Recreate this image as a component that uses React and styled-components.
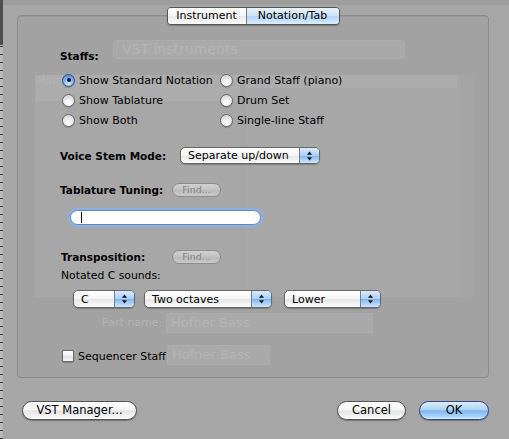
import React from "react";
import styled, { createGlobalStyle, css } from "styled-components";

const GlobalStyle = createGlobalStyle`
  html, body {
    margin: 0;
    padding: 0;
    background: #a6a6a6;
  }
  body {
    font-family: "DejaVu Sans", "Liberation Sans", sans-serif;
    font-size: 11px;
    color: #000;
  }
`;

const Window = styled.div`
  width: 509px;
  height: 439px;
  overflow: hidden;
  display: flex;
  background: linear-gradient(#9d9d9d 0 5px, #a6a6a6 5px);
`;

const Ruler = styled.div`
  width: 3px;
  flex: none;
  background:
    linear-gradient(#4e4e4e 0 45px, transparent 45px),
    repeating-linear-gradient(#b9b9b9 0 6px, #3a3a3a 6px 7px, #b9b9b9 7px 8px);
`;

const Sheet = styled.div`
  flex: 1;
  display: flex;
  flex-direction: column;
  padding: 7px 20px 0 14px;
`;

const TabBar = styled.div`
  align-self: center;
  display: flex;
  height: 18px;
  box-sizing: border-box;
  margin-bottom: -10px;
  position: relative;
  z-index: 2;
  border: 1px solid #555;
  border-radius: 4px;
  overflow: hidden;
  box-shadow: 0 1px 1px rgba(0, 0, 0, 0.25);
`;

const Tab = styled.div`
  width: ${(p) => p.$w}px;
  line-height: 16px;
  text-align: center;
  font-size: 11px;
  background: linear-gradient(#ffffff, #f4f4f4 50%, #e8e8e8 51%, #fafafa);
  & + & {
    border-left: 1px solid #7a7a7a;
  }
  ${(p) =>
    p.$active &&
    css`
      background: linear-gradient(#e9f3fd, #cbe1f8 50%, #b3d3f5 51%, #d9ecfd);
    `}
`;

const GroupBox = styled.div`
  position: relative;
  height: 363px;
  box-sizing: border-box;
  border: 1px solid #8b8b8b;
  border-radius: 4px;
  background: #a2a2a2;
  box-shadow: inset 0 1px 0 #999;
`;

/* faded window underneath the sheet */
const Ghost = styled.div`
  position: absolute;
  inset: 0;
  color: #b4b4b4;
  font-size: 13px;
`;

const GhostBlock = styled.div`
  position: absolute;
  box-sizing: border-box;
  background: ${(p) => p.$bg || "#a8a8a8"};
  ${(p) => p.$border && css`border: 1px solid #acacac;`}
  border-radius: ${(p) => p.$r || 0}px;
  padding-left: ${(p) => p.$pad || 0}px;
  line-height: ${(p) => p.$lh || 18}px;
  font-size: ${(p) => p.$fs || 13}px;
  white-space: nowrap;
`;

const Content = styled.div`
  position: relative;
  z-index: 1;
  display: flex;
  flex-direction: column;
  align-items: flex-start;
  padding: 32px 0 0 42px;
`;

const SectionLabel = styled.div`
  font-weight: bold;
  font-size: 10.5px;
  line-height: 16px;
  height: 16px;
`;

const RadioGrid = styled.div`
  margin-top: 6px;
  margin-left: 2px;
  display: grid;
  grid-template-columns: 158px auto;
  grid-template-rows: repeat(3, 20px);
  grid-auto-flow: column;
`;

const Choice = styled.label`
  display: flex;
  align-items: center;
  gap: 4px;
  white-space: nowrap;
`;

const Radio = styled.span`
  width: 13px;
  height: 13px;
  box-sizing: border-box;
  border-radius: 50%;
  border: 1px solid #6a6a6a;
  background: radial-gradient(circle at 50% 78%, #ffffff 0%, #f2f2f2 35%, #c8c8c8 100%);
  box-shadow: 0 1px 1px rgba(0, 0, 0, 0.2);
  display: flex;
  align-items: center;
  justify-content: center;
  ${(p) =>
    p.$on &&
    css`
      border-color: #34548a;
      background: radial-gradient(circle at 50% 75%, #d8ecff 0%, #7fb6ef 45%, #3e7acb 100%);
      &::after {
        content: "";
        width: 4px;
        height: 4px;
        border-radius: 50%;
        background: #111;
      }
    `}
`;

const Check = styled.span`
  width: 12px;
  height: 12px;
  box-sizing: border-box;
  border-radius: 2px;
  border: 1px solid #6a6a6a;
  background: linear-gradient(#ffffff, #f0f0f0 50%, #dedede 51%, #f8f8f8);
  box-shadow: 0 1px 1px rgba(0, 0, 0, 0.2);
`;

const Row = styled.div`
  display: flex;
  align-items: center;
  height: ${(p) => p.$h}px;
  margin-top: ${(p) => p.$top}px;
  margin-left: ${(p) => p.$left || 0}px;
`;

const RowLabel = styled.div`
  width: ${(p) => p.$w}px;
  flex: none;
  font-weight: bold;
  font-size: 10.5px;
`;

const Popup = styled.div`
  display: flex;
  width: ${(p) => p.$w}px;
  height: ${(p) => p.$h || 18}px;
  margin-left: ${(p) => p.$ml || 0}px;
  box-sizing: border-box;
  border: 1px solid #666;
  border-radius: 5px;
  overflow: hidden;
  background: linear-gradient(#ffffff, #f4f4f4 50%, #e6e6e6 51%, #fbfbfb);
  box-shadow: 0 1px 1px rgba(0, 0, 0, 0.25);
`;

const PopupText = styled.span`
  flex: 1;
  padding-left: 7px;
  display: flex;
  align-items: center;
  white-space: nowrap;
`;

const PopupArrows = styled.span`
  width: 19px;
  flex: none;
  border-left: 1px solid #6c7ea5;
  background: linear-gradient(#d9eafc, #a9cff6 50%, #80b6ef 51%, #cfe6fd);
  display: flex;
  align-items: center;
  justify-content: center;
`;

const FindButton = styled.div`
  width: 49px;
  height: 14px;
  box-sizing: border-box;
  border: 1px solid #8c8c8c;
  border-radius: 7px;
  background: linear-gradient(#d0d0d0, #c2c2c2 50%, #b9b9b9 51%, #c9c9c9);
  color: #858585;
  font-size: 9.5px;
  line-height: 12px;
  text-align: center;
`;

const TextField = styled.div`
  margin: 13px 0 0 10px;
  width: 191px;
  height: 15px;
  box-sizing: border-box;
  border: 1px solid #6b86b4;
  border-radius: 8px;
  background: #fff;
  box-shadow: 0 0 0 2px #8db0e0, 0 0 2px 3px rgba(140, 176, 224, 0.4);
  display: flex;
  align-items: center;
  padding-left: 10px;
`;

const Caret = styled.span`
  width: 1px;
  height: 11px;
  background: #000;
`;

const PlainLabel = styled.div`
  font-size: 10.8px;
`;

const Footer = styled.div`
  display: flex;
  align-items: center;
  margin-top: 23px;
  padding-left: 5px;
`;

const PushButton = styled.div`
  width: ${(p) => p.$w}px;
  height: 19px;
  box-sizing: border-box;
  border: 1px solid #555;
  border-radius: 10px;
  background: linear-gradient(#ffffff, #f5f5f5 45%, #e4e4e4 52%, #f3f3f3 85%, #ffffff);
  box-shadow: 0 1px 1px rgba(0, 0, 0, 0.3);
  font-size: 11.5px;
  line-height: 17px;
  text-align: center;
  margin-left: ${(p) => p.$ml || 0}px;
  ${(p) =>
    p.$primary &&
    css`
      border-color: #34498a;
      background: linear-gradient(#dcedfd, #afd3f7 45%, #7fb6f0 52%, #a7d4fb 85%, #dcf1ff);
    `}
`;

const Arrows = () => (
  <svg width="7" height="10" viewBox="0 0 7 10">
    <path d="M3.5 0.5 L6 3.8 H1 Z" fill="#111" />
    <path d="M3.5 9.5 L6 6.2 H1 Z" fill="#111" />
  </svg>
);

const Select = ({ w, h, ml, children }) => (
  <Popup $w={w} $h={h} $ml={ml}>
    <PopupText>{children}</PopupText>
    <PopupArrows>
      <Arrows />
    </PopupArrows>
  </Popup>
);

const staffs = [
  { label: "Show Standard Notation", on: true },
  { label: "Show Tablature" },
  { label: "Show Both" },
  { label: "Grand Staff (piano)" },
  { label: "Drum Set" },
  { label: "Single-line Staff" },
];

export default function App() {
  return (
    <>
      <GlobalStyle />
      <Window>
        <Ruler />
        <Sheet>
          <TabBar>
            <Tab $w={78}>Instrument</Tab>
            <Tab $w={92} $active>
              Notation/Tab
            </Tab>
          </TabBar>
          <GroupBox>
            <Ghost>
              <GhostBlock
                $border
                $r={4}
                $pad={8}
                $bg="#a9a9a9"
                style={{ left: 95, top: 24, width: 292, height: 19, lineHeight: "17px", fontSize: 14 }}
              >
                VST instruments
              </GhostBlock>
              <GhostBlock $bg="#a7a7a7" style={{ left: 17, top: 59, width: 440, height: 222 }} />
              <GhostBlock $bg="#a4a4a4" style={{ left: 442, top: 59, width: 15, height: 222 }} />
              <GhostBlock $bg="#acacac" style={{ left: 17, top: 59, width: 422, height: 13 }} />
              <GhostBlock $bg="#acacac" style={{ left: 17, top: 72, width: 205, height: 13 }} />
              <GhostBlock $bg="#a5a5a5" style={{ left: 222, top: 59, width: 5, height: 222 }} />
              <GhostBlock $bg="transparent" $pad={2} $lh={12} $fs={10} style={{ left: 17, top: 59 }}>
                Miros
              </GhostBlock>
              <GhostBlock $bg="transparent" $lh={20} $fs={11} style={{ left: 84, top: 297 }}>
                Part name:
              </GhostBlock>
              <GhostBlock $bg="#a9a9a9" $border $pad={4} style={{ left: 148, top: 297, width: 207, height: 20 }}>
                Hofner Bass
              </GhostBlock>
              <GhostBlock $bg="#a9a9a9" $border $pad={4} style={{ left: 149, top: 329, width: 103, height: 20 }}>
                Hofner Bass
              </GhostBlock>
            </Ghost>

            <Content>
              <SectionLabel>Staffs:</SectionLabel>
              <RadioGrid>
                {staffs.map((s) => (
                  <Choice key={s.label}>
                    <Radio $on={s.on} />
                    {s.label}
                  </Choice>
                ))}
              </RadioGrid>

              <Row $h={17} $top={17}>
                <RowLabel $w={120}>Voice Stem Mode:</RowLabel>
                <Select w={140} h={17}>
                  Separate up/down
                </Select>
              </Row>

              <Row $h={14} $top={19}>
                <RowLabel $w={112}>Tablature Tuning:</RowLabel>
                <FindButton>Find...</FindButton>
              </Row>

              <TextField>
                <Caret />
              </TextField>

              <Row $h={14} $top={25} $left={1}>
                <RowLabel $w={111}>Transposition:</RowLabel>
                <FindButton>Find...</FindButton>
              </Row>

              <Row $h={14} $top={4} $left={1}>
                <PlainLabel>Notated C sounds:</PlainLabel>
              </Row>

              <Row $h={18} $top={8} $left={13}>
                <Select w={62}>C</Select>
                <Select w={128} ml={9}>
                  Two octaves
                </Select>
                <Select w={97} ml={12}>
                  Lower
                </Select>
              </Row>

              <Row $h={14} $top={41} $left={2}>
                <Choice>
                  <Check />
                  Sequencer Staff
                </Choice>
              </Row>
            </Content>
          </GroupBox>

          <Footer>
            <PushButton $w={115}>VST Manager...</PushButton>
            <PushButton $w={69} $ml={200}>
              Cancel
            </PushButton>
            <PushButton $w={70} $ml={13} $primary>
              OK
            </PushButton>
          </Footer>
        </Sheet>
      </Window>
    </>
  );
}
